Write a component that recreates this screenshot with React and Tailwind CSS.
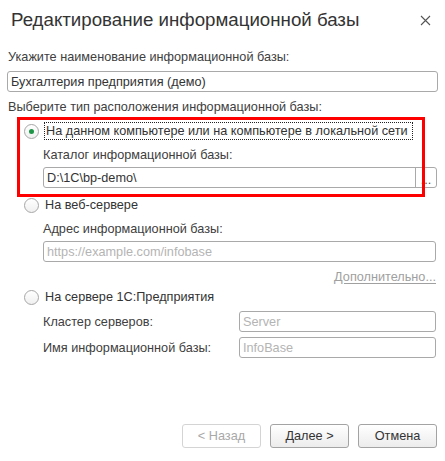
import React from "react";

function Radio({ checked }) {
  return (
    <div className="w-[15px] h-[15px] rounded-full border border-[#a6a6a6] bg-gradient-to-b from-[#ffffff] to-[#f0f0f0] flex items-center justify-center shrink-0">
      {checked && <div className="w-[5px] h-[5px] rounded-full bg-[#1e9447]" />}
    </div>
  );
}

function Input({ value, placeholder, className = "" }) {
  return (
    <div className={"h-[21px] border border-[#a9a9a9] rounded-[3px] bg-white flex items-center px-[3px] whitespace-nowrap " + className}>
      {value ? (
        <span className="text-[#333333]">{value}</span>
      ) : (
        <span className="text-[#b4b4b4]">{placeholder}</span>
      )}
    </div>
  );
}

function Button({ children, disabled }) {
  return (
    <div
      className={
        "w-[79px] h-[24px] rounded-[3px] flex items-center justify-center border " +
        (disabled
          ? "border-[#d4d4d4] text-[#a8a8a8] bg-white"
          : "border-[#a3a3a3] text-[#333333] bg-gradient-to-b from-[#ffffff] to-[#ececec]")
      }
    >
      {children}
    </div>
  );
}

export default function App() {
  return (
    <div className="w-[445px] h-[461px] bg-white flex flex-col font-['Liberation_Sans',Arial,sans-serif] text-[12.7px] leading-[16px] text-[#404040] overflow-hidden whitespace-nowrap">
      <div className="h-[40px] flex items-center justify-between pl-[11px] pr-[14px]">
        <span className="text-[18.7px] leading-[24px] text-[#333333]">Редактирование информационной базы</span>
        <svg width="11" height="11" viewBox="0 0 11 11" className="mt-[1px]">
          <path d="M1 1 L10 10 M10 1 L1 10" stroke="#555" strokeWidth="1.1" />
        </svg>
      </div>

      <div className="px-[7px] flex flex-col">
        <div className="mt-[9px] h-[16px] pl-[1px]">Укажите наименование информационной базы:</div>
        <Input className="mt-[6px] w-[431px]" value="Бухгалтерия предприятия (демо)" />
        <div className="mt-[7px] h-[16px] pl-[1px]">Выберите тип расположения информационной базы:</div>

        <div className="relative mt-[2px] flex flex-col pl-[17px]">
          <div className="absolute left-[10px] top-0 w-[408px] h-[80px] border-[3px] border-[#ff0000] pointer-events-none" />

          <div className="mt-[5px] h-[18px] flex items-center">
            <Radio checked />
            <div className="ml-[5px] h-[18px] w-[369px] border border-dotted border-[#222] flex items-center pl-[1px] text-[#333333]">
              На данном компьютере или на компьютере в локальной сети
            </div>
          </div>
          <div className="mt-[7px] h-[16px] pl-[19px]">Каталог информационной базы:</div>
          <div className="mt-[4px] ml-[19px] h-[21px] w-[394px] border border-[#a9a9a9] rounded-[3px] flex">
            <div className="flex-1 flex items-center px-[3px] text-[#333333]">D:\1C\bp-demo\</div>
            <div className="w-[21px] border-l border-[#a9a9a9] flex items-end justify-center pb-[2px] text-[#555] leading-[10px]">...</div>
          </div>

          <div className="mt-[8px] h-[18px] flex items-center">
            <Radio />
            <span className="ml-[6px] text-[#333333]">На веб-сервере</span>
          </div>
          <div className="mt-[7px] h-[16px] pl-[19px]">Адрес информационной базы:</div>
          <Input className="mt-[4px] ml-[19px] w-[393px]" placeholder="https://example.com/infobase" />
          <div className="mt-[7px] h-[16px] w-[412px] flex justify-end">
            <span className="text-[#a0a0a0] underline underline-offset-[2px]">Дополнительно...</span>
          </div>

          <div className="mt-[3px] h-[18px] flex items-center">
            <Radio />
            <span className="ml-[6px] text-[#333333]">На сервере 1С:Предприятия</span>
          </div>
          <div className="mt-[5px] ml-[19px] w-[393px] flex items-center">
            <span className="w-[196px]">Кластер серверов:</span>
            <Input className="flex-1" placeholder="Server" />
          </div>
          <div className="mt-[5px] ml-[19px] w-[393px] flex items-center">
            <span className="w-[196px]">Имя информационной базы:</span>
            <Input className="flex-1" placeholder="InfoBase" />
          </div>
        </div>
      </div>

      <div className="mt-auto pb-[13px] pr-[8px] flex justify-end gap-[9px]">
        <Button disabled>&lt; Назад</Button>
        <Button>Далее &gt;</Button>
        <Button>Отмена</Button>
      </div>
    </div>
  );
}
